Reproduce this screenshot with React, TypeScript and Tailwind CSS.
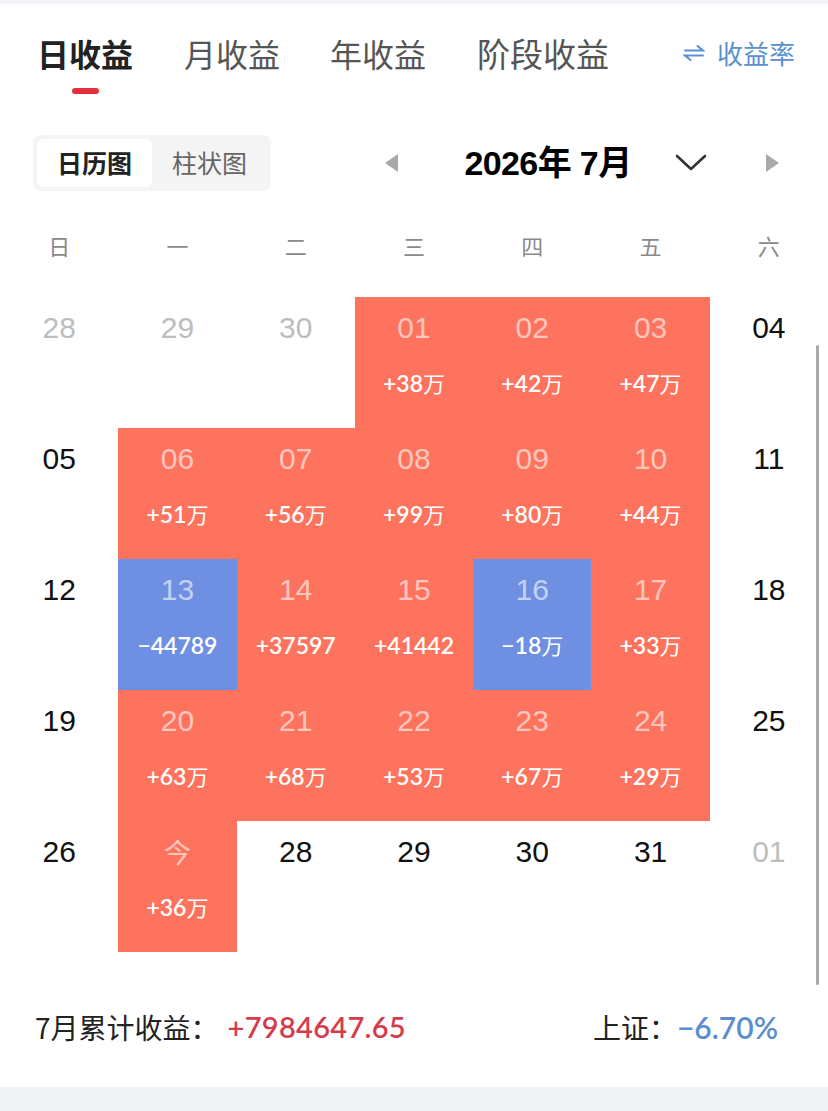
import React from "react";

type Tone = "none" | "up" | "down";
type Cell = { day: string; value?: string; tone: Tone; muted?: boolean; dark?: boolean };

const weeks: Cell[][] = [
  [
    { day: "28", tone: "none", muted: true },
    { day: "29", tone: "none", muted: true },
    { day: "30", tone: "none", muted: true },
    { day: "01", value: "+38万", tone: "up" },
    { day: "02", value: "+42万", tone: "up" },
    { day: "03", value: "+47万", tone: "up" },
    { day: "04", tone: "none", dark: true },
  ],
  [
    { day: "05", tone: "none", dark: true },
    { day: "06", value: "+51万", tone: "up" },
    { day: "07", value: "+56万", tone: "up" },
    { day: "08", value: "+99万", tone: "up" },
    { day: "09", value: "+80万", tone: "up" },
    { day: "10", value: "+44万", tone: "up" },
    { day: "11", tone: "none", dark: true },
  ],
  [
    { day: "12", tone: "none", dark: true },
    { day: "13", value: "−44789", tone: "down" },
    { day: "14", value: "+37597", tone: "up" },
    { day: "15", value: "+41442", tone: "up" },
    { day: "16", value: "−18万", tone: "down" },
    { day: "17", value: "+33万", tone: "up" },
    { day: "18", tone: "none", dark: true },
  ],
  [
    { day: "19", tone: "none", dark: true },
    { day: "20", value: "+63万", tone: "up" },
    { day: "21", value: "+68万", tone: "up" },
    { day: "22", value: "+53万", tone: "up" },
    { day: "23", value: "+67万", tone: "up" },
    { day: "24", value: "+29万", tone: "up" },
    { day: "25", tone: "none", dark: true },
  ],
  [
    { day: "26", tone: "none", dark: true },
    { day: "今", value: "+36万", tone: "up" },
    { day: "28", tone: "none", dark: true },
    { day: "29", tone: "none", dark: true },
    { day: "30", tone: "none", dark: true },
    { day: "31", tone: "none", dark: true },
    { day: "01", tone: "none", muted: true },
  ],
];

const weekdays = ["日", "一", "二", "三", "四", "五", "六"];

// Splits "+38万" into the numeric part and the unit so the unit can use a lighter CJK weight.
function Amount({ text }: { text: string }) {
  const unit = text.endsWith("万");
  const num = unit ? text.slice(0, -1) : text;
  return (
    <span className="inline-flex items-baseline">
      <span className="font-semibold font-['Lato',sans-serif]">{num}</span>
      {unit && <span className="font-normal font-['Noto_Sans_CJK_SC',sans-serif] text-[22px]">万</span>}
    </span>
  );
}

function DayCell({ c }: { c: Cell }) {
  const bg =
    c.tone === "up" ? "bg-[#fe735d]" : c.tone === "down" ? "bg-[#6f8fe3]" : "bg-white";
  const dayColor =
    c.tone !== "none"
      ? "text-white/60"
      : c.muted
      ? "text-[#bdbdbd]"
      : "text-[#111111]";
  const dayFont =
    c.day === "今"
      ? "font-['Noto_Sans_CJK_SC',sans-serif] text-[27px]"
      : "font-['Liberation_Sans','Noto_Sans_CJK_SC',sans-serif] text-[30px]";
  return (
    <div className={`h-[131px] flex flex-col items-center ${bg}`}>
      <div className={`pt-[16px] leading-[30px] ${dayFont} ${dayColor}`}>{c.day}</div>
      {c.value && (
        <div className="mt-[26px] leading-[26px] text-[23px] text-white">
          <Amount text={c.value} />
        </div>
      )}
    </div>
  );
}

export default function App() {
  return (
    <div className="relative w-[828px] h-[1111px] overflow-hidden bg-white font-['Noto_Sans_CJK_SC','Noto_Sans',sans-serif]">
      <div className="h-[4px] bg-[#f2f3f7]" />

      {/* period tabs */}
      <div className="flex items-start pl-[37px] pr-[33px] pt-[33px]">
        <div className="flex flex-col items-center">
          <div className="text-[32px] leading-[32px] font-bold text-[#222222]">日收益</div>
          <div className="mt-[19px] w-[27px] h-[6px] rounded-full bg-[#e2303f]" />
        </div>
        <div className="ml-[51px] text-[32px] leading-[32px] text-[#555555]">月收益</div>
        <div className="ml-[50px] text-[32px] leading-[32px] text-[#555555]">年收益</div>
        <div className="ml-[51px] text-[33px] leading-[32px] text-[#555555]">阶段收益</div>
        <div className="ml-auto flex items-center h-[32px] text-[#5a8fd0]">
          <svg width="22" height="20" viewBox="0 0 22 20" fill="none" stroke="#5a8fd0" strokeWidth="2" strokeLinecap="round">
            <path d="M2 7.5 H20 L14.5 3" />
            <path d="M20 12.5 H2 L7.5 17" />
          </svg>
          <span className="ml-[12px] text-[26px] leading-[32px]">收益率</span>
        </div>
      </div>

      {/* view toggle and month switcher */}
      <div className="mt-[41px] flex items-center h-[56px] pl-[33px]">
        <div className="w-[238px] h-[56px] p-[4px] bg-[#f4f4f4] rounded-[8px] flex">
          <div className="w-[115px] h-[48px] bg-white rounded-[6px] flex items-center justify-center text-[25px] font-bold text-[#222222]">
            日历图
          </div>
          <div className="flex-1 flex items-center justify-center text-[25px] text-[#666666]">
            柱状图
          </div>
        </div>
        <svg className="ml-[114px]" width="14" height="18" viewBox="0 0 14 18">
          <polygon points="13,0 13,18 0,9" fill="#a9a9a9" />
        </svg>
        <div className="ml-[48px] w-[202px] flex justify-center text-[34px] leading-[40px] font-bold text-black tracking-[-0.6px] font-['Liberation_Sans','Noto_Sans_CJK_SC',sans-serif]">
          2026年 7月
        </div>
        <svg className="ml-[26px]" width="32" height="18" viewBox="0 0 32 18" fill="none" stroke="#333333" strokeWidth="2.6" strokeLinecap="round" strokeLinejoin="round">
          <polyline points="2,2 16,15 30,2" />
        </svg>
        <svg className="ml-[58px]" width="14" height="18" viewBox="0 0 14 18">
          <polygon points="1,0 1,18 14,9" fill="#a9a9a9" />
        </svg>
      </div>

      {/* weekday header */}
      <div className="grid grid-cols-7 h-[106px] pt-[40px]">
        {weekdays.map((w) => (
          <div key={w} className="flex justify-center text-[22px] leading-[28px] text-[#8a8a8a]">
            {w}
          </div>
        ))}
      </div>

      {/* calendar */}
      <div className="grid grid-cols-7">
        {weeks.flat().map((c, i) => (
          <DayCell key={i} c={c} />
        ))}
      </div>

      {/* monthly summary */}
      <div className="mt-[58px] flex items-center pl-[35px] pr-[50px] h-[34px]">
        <span className="text-[28px] leading-[34px] text-[#222222]">7月累计收益：</span>
        <span className="ml-[9px] text-[29px] leading-[34px] font-semibold text-[#d63b4b] tracking-[0.3px] font-['Lato',sans-serif]">
          +7984647.65
        </span>
        <span className="ml-auto text-[28px] leading-[34px] text-[#222222]">上证：</span>
        <span className="text-[30px] leading-[34px] font-semibold text-[#5b8dd0] font-['Lato',sans-serif]">−6.70%</span>
      </div>

      <div className="absolute left-0 right-0 bottom-0 h-[24px] bg-[#f2f3f7]" />

      {/* scroll indicator */}
      <div className="absolute left-[816px] top-[345px] w-[3px] h-[640px] rounded-full bg-[#a9a9a9]" />
    </div>
  );
}
